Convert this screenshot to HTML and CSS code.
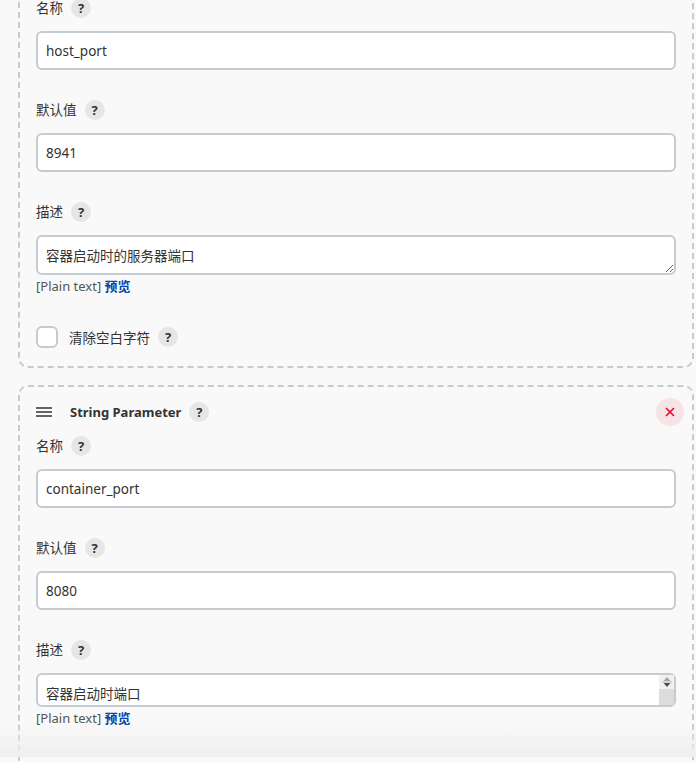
FILE: index.html
```html
<!DOCTYPE html>
<html lang="zh">
<head>
<meta charset="utf-8">
<title>String Parameter</title>
<link rel="stylesheet" href="styles.css">
</head>
<body>
<main class="page">
  <section class="card card-first">
    <div class="field field-first">
      <div class="label"><span>名称</span><span class="help">?</span></div>
      <input class="input" type="text" value="host_port">
    </div>
    <div class="field">
      <div class="label"><span>默认值</span><span class="help">?</span></div>
      <input class="input" type="text" value="8941">
    </div>
    <div class="field">
      <div class="label"><span>描述</span><span class="help">?</span></div>
      <textarea class="textarea">容器启动时的服务器端口</textarea>
      <div class="hint">[Plain text] <a class="preview">预览</a></div>
    </div>
    <div class="check-row">
      <span class="checkbox"></span>
      <span>清除空白字符</span>
      <span class="help">?</span>
    </div>
  </section>
  <section class="card">
    <header class="card-head">
      <svg class="handle" width="16" height="10" viewBox="0 0 16 10"><path d="M0 1h16M0 5h16M0 9h16" stroke="#333" stroke-width="1.4" fill="none"/></svg>
      <strong>String Parameter</strong>
      <span class="help">?</span>
      <button class="close" type="button"><svg width="10" height="10" viewBox="0 0 10 10"><path d="M1 1l8 8M9 1l-8 8" stroke="#e6001f" stroke-width="1.5" fill="none"/></svg></button>
    </header>
    <div class="field field-tight">
      <div class="label"><span>名称</span><span class="help">?</span></div>
      <input class="input" type="text" value="container_port">
    </div>
    <div class="field">
      <div class="label"><span>默认值</span><span class="help">?</span></div>
      <input class="input" type="text" value="8080">
    </div>
    <div class="field">
      <div class="label"><span>描述</span><span class="help">?</span></div>
      <div class="scroll-wrap">
        <textarea class="textarea textarea-small">容器启动时端口</textarea>
        <span class="scrollbar"><svg width="14" height="14" viewBox="0 0 14 14"><path d="M7 2l3.5 4h-7z" fill="#a3a3a3"/><path d="M2 7h10" stroke="#bbb"/><path d="M7 12l3.5-4h-7z" fill="#505050"/></svg></span>
      </div>
      <div class="hint">[Plain text] <a class="preview">预览</a></div>
    </div>
  </section>
</main>
<div class="fade"></div>
</body>
</html>
```
FILE: styles.css
```css
html, body {
  margin: 0;
  height: 762px;
  overflow: hidden;
  background: #f9f9f9;
}
body {
  font-family: "Noto Sans", "Noto Sans CJK SC", sans-serif;
  font-size: 13.5px;
  color: #333;
}
.page {
  padding-left: 18px;
  width: 676px;
}
.card {
  box-sizing: border-box;
  width: 676px;
  border: 2px dashed #c3ccd1;
  border-radius: 10px;
  padding: 0 16px;
  height: 390px;
}
.card-first {
  height: 370px;
  border-top: none;
  border-radius: 0 0 10px 10px;
  margin-bottom: 17px;
}
.label {
  display: flex;
  align-items: center;
  gap: 8px;
  height: 20px;
  line-height: 20px;
  margin-bottom: 13px;
}
.field { margin-top: 30px; }
.field-first { margin-top: 0; padding-top: 0; margin-top: -2px; }
.field-tight { margin-top: 13px; }
.help {
  display: inline-flex;
  align-items: center;
  justify-content: center;
  width: 20px;
  height: 20px;
  border-radius: 50%;
  background: #e6e6e6;
  color: #333;
  font-size: 13px;
  font-weight: 700;
}
.input, .textarea {
  display: block;
  box-sizing: border-box;
  width: 640px;
  margin: 0;
  border: 2px solid #c3ccd1;
  border-radius: 6px;
  background: #fff;
  color: #333;
  font: inherit;
  padding: 0 8px;
  outline: none;
}
.input { height: 39px; }
.textarea {
  height: 40px;
  padding: 7px 8px;
  line-height: 24px;
  overflow: hidden;
}
.textarea-small { height: 34px; }
.scroll-wrap { position: relative; width: 640px; }
.scrollbar {
  position: absolute;
  top: 2px;
  right: 2px;
  width: 15px;
  height: 30px;
  background: linear-gradient(#f1f1f1 0 14px, #dcdcdc 14px);
}
.scrollbar svg { display: block; margin: 0 auto; }
.hint {
  font-size: 13px;
  line-height: 18px;
  margin-top: 2px;
  color: #555;
}
.preview { color: #0048ad; font-weight: 700; }
.check-row {
  display: flex;
  align-items: center;
  margin-top: 31px;
  gap: 8px;
  height: 22px;
}
.checkbox {
  box-sizing: border-box;
  width: 22px;
  height: 22px;
  border: 2px solid #c3ccd1;
  border-radius: 6px;
  background: #fff;
  margin-right: 3px;
}
.card-head {
  display: flex;
  align-items: center;
  height: 22px;
  padding-top: 14px;
  font-size: 13px;
}
.handle { margin-right: 18px; }
.card-head .help { margin-left: 8px; }
.close {
  margin-left: auto;
  margin-right: -8px;
  width: 28px;
  height: 28px;
  padding: 0;
  border: none;
  border-radius: 50%;
  background: #f6e3e6;
  display: flex;
  align-items: center;
  justify-content: center;
}
.fade {
  position: fixed;
  left: 0;
  right: 0;
  bottom: 5px;
  height: 32px;
  background: linear-gradient(rgba(238,238,238,0), #eee);
  pointer-events: none;
}
```
